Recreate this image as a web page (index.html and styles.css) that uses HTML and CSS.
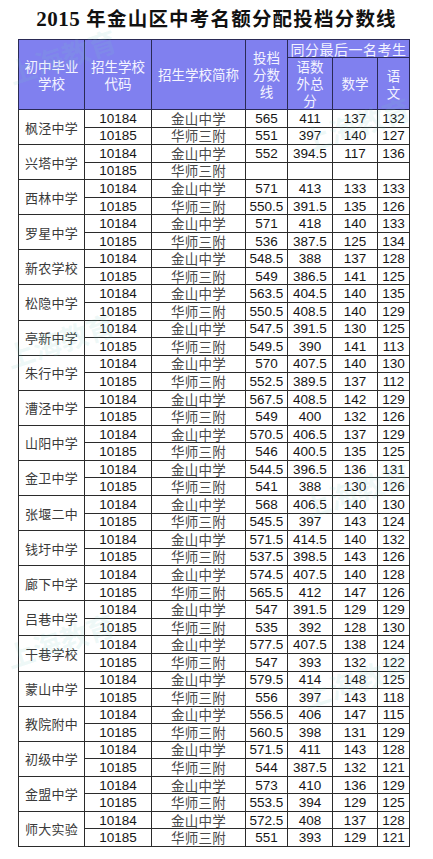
FILE: index.html
```html
<!DOCTYPE html>
<html lang="zh-CN">
<head>
<meta charset="utf-8">
<title>2015 年金山区中考名额分配投档分数线</title>
<link rel="stylesheet" href="styles.css">
</head>
<body>
<div class="page">
  <h1 class="title"><span class="num">2015</span> 年金山区中考名额分配投档分数线</h1>
  <table class="score">
    <colgroup>
      <col class="c1"><col class="c2"><col class="c3"><col class="c4"><col class="c5"><col class="c6"><col class="c7">
    </colgroup>
    <thead>
      <tr class="h1">
        <th rowspan="2">初中毕业<br>学校</th>
        <th rowspan="2">招生学校<br>代码</th>
        <th rowspan="2">招生学校简称</th>
        <th rowspan="2" class="tight">投档<br>分数<br>线</th>
        <th colspan="3" class="group">同分最后一名考生</th>
      </tr>
      <tr class="h2">
        <th class="tight">语数<br>外总<br>分</th>
        <th>数学</th>
        <th class="tight">语<br>文</th>
      </tr>
    </thead>
    <tbody>
      <tr><td rowspan="2" class="sch">枫泾中学</td><td>10184</td><td class="cn">金山中学</td><td>565</td><td>411</td><td>137</td><td>132</td></tr>
      <tr><td>10185</td><td class="cn">华师三附</td><td>551</td><td>397</td><td>140</td><td>127</td></tr>
      <tr><td rowspan="2" class="sch">兴塔中学</td><td>10184</td><td class="cn">金山中学</td><td>552</td><td>394.5</td><td>117</td><td>136</td></tr>
      <tr><td>10185</td><td class="cn">华师三附</td><td></td><td></td><td></td><td></td></tr>
      <tr><td rowspan="2" class="sch">西林中学</td><td>10184</td><td class="cn">金山中学</td><td>571</td><td>413</td><td>133</td><td>133</td></tr>
      <tr><td>10185</td><td class="cn">华师三附</td><td>550.5</td><td>391.5</td><td>135</td><td>126</td></tr>
      <tr><td rowspan="2" class="sch">罗星中学</td><td>10184</td><td class="cn">金山中学</td><td>571</td><td>418</td><td>140</td><td>133</td></tr>
      <tr><td>10185</td><td class="cn">华师三附</td><td>536</td><td>387.5</td><td>125</td><td>134</td></tr>
      <tr><td rowspan="2" class="sch">新农学校</td><td>10184</td><td class="cn">金山中学</td><td>548.5</td><td>388</td><td>137</td><td>128</td></tr>
      <tr><td>10185</td><td class="cn">华师三附</td><td>549</td><td>386.5</td><td>141</td><td>125</td></tr>
      <tr><td rowspan="2" class="sch">松隐中学</td><td>10184</td><td class="cn">金山中学</td><td>563.5</td><td>404.5</td><td>140</td><td>135</td></tr>
      <tr><td>10185</td><td class="cn">华师三附</td><td>550.5</td><td>408.5</td><td>140</td><td>129</td></tr>
      <tr><td rowspan="2" class="sch">亭新中学</td><td>10184</td><td class="cn">金山中学</td><td>547.5</td><td>391.5</td><td>130</td><td>125</td></tr>
      <tr><td>10185</td><td class="cn">华师三附</td><td>549.5</td><td>390</td><td>141</td><td>113</td></tr>
      <tr><td rowspan="2" class="sch">朱行中学</td><td>10184</td><td class="cn">金山中学</td><td>570</td><td>407.5</td><td>140</td><td>130</td></tr>
      <tr><td>10185</td><td class="cn">华师三附</td><td>552.5</td><td>389.5</td><td>137</td><td>112</td></tr>
      <tr><td rowspan="2" class="sch">漕泾中学</td><td>10184</td><td class="cn">金山中学</td><td>567.5</td><td>408.5</td><td>142</td><td>129</td></tr>
      <tr><td>10185</td><td class="cn">华师三附</td><td>549</td><td>400</td><td>132</td><td>126</td></tr>
      <tr><td rowspan="2" class="sch">山阳中学</td><td>10184</td><td class="cn">金山中学</td><td>570.5</td><td>406.5</td><td>137</td><td>129</td></tr>
      <tr><td>10185</td><td class="cn">华师三附</td><td>546</td><td>400.5</td><td>135</td><td>125</td></tr>
      <tr><td rowspan="2" class="sch">金卫中学</td><td>10184</td><td class="cn">金山中学</td><td>544.5</td><td>396.5</td><td>136</td><td>131</td></tr>
      <tr><td>10185</td><td class="cn">华师三附</td><td>541</td><td>388</td><td>130</td><td>126</td></tr>
      <tr><td rowspan="2" class="sch">张堰二中</td><td>10184</td><td class="cn">金山中学</td><td>568</td><td>406.5</td><td>140</td><td>130</td></tr>
      <tr><td>10185</td><td class="cn">华师三附</td><td>545.5</td><td>397</td><td>143</td><td>124</td></tr>
      <tr><td rowspan="2" class="sch">钱圩中学</td><td>10184</td><td class="cn">金山中学</td><td>571.5</td><td>414.5</td><td>140</td><td>132</td></tr>
      <tr><td>10185</td><td class="cn">华师三附</td><td>537.5</td><td>398.5</td><td>143</td><td>126</td></tr>
      <tr><td rowspan="2" class="sch">廊下中学</td><td>10184</td><td class="cn">金山中学</td><td>574.5</td><td>407.5</td><td>140</td><td>128</td></tr>
      <tr><td>10185</td><td class="cn">华师三附</td><td>565.5</td><td>412</td><td>147</td><td>126</td></tr>
      <tr><td rowspan="2" class="sch">吕巷中学</td><td>10184</td><td class="cn">金山中学</td><td>547</td><td>391.5</td><td>129</td><td>129</td></tr>
      <tr><td>10185</td><td class="cn">华师三附</td><td>535</td><td>392</td><td>128</td><td>130</td></tr>
      <tr><td rowspan="2" class="sch">干巷学校</td><td>10184</td><td class="cn">金山中学</td><td>577.5</td><td>407.5</td><td>138</td><td>124</td></tr>
      <tr><td>10185</td><td class="cn">华师三附</td><td>547</td><td>393</td><td>132</td><td>122</td></tr>
      <tr><td rowspan="2" class="sch">蒙山中学</td><td>10184</td><td class="cn">金山中学</td><td>579.5</td><td>414</td><td>148</td><td>125</td></tr>
      <tr><td>10185</td><td class="cn">华师三附</td><td>556</td><td>397</td><td>143</td><td>118</td></tr>
      <tr><td rowspan="2" class="sch">教院附中</td><td>10184</td><td class="cn">金山中学</td><td>556.5</td><td>406</td><td>147</td><td>115</td></tr>
      <tr><td>10185</td><td class="cn">华师三附</td><td>560.5</td><td>398</td><td>131</td><td>129</td></tr>
      <tr><td rowspan="2" class="sch">初级中学</td><td>10184</td><td class="cn">金山中学</td><td>571.5</td><td>411</td><td>143</td><td>128</td></tr>
      <tr><td>10185</td><td class="cn">华师三附</td><td>544</td><td>387.5</td><td>132</td><td>121</td></tr>
      <tr><td rowspan="2" class="sch">金盟中学</td><td>10184</td><td class="cn">金山中学</td><td>573</td><td>410</td><td>136</td><td>129</td></tr>
      <tr><td>10185</td><td class="cn">华师三附</td><td>553.5</td><td>394</td><td>129</td><td>125</td></tr>
      <tr><td rowspan="2" class="sch">师大实验</td><td>10184</td><td class="cn">金山中学</td><td>572.5</td><td>408</td><td>137</td><td>128</td></tr>
      <tr><td>10185</td><td class="cn">华师三附</td><td>551</td><td>393</td><td>129</td><td>121</td></tr>
    </tbody>
  </table>
  <div class="wm wm1">上海教育</div>
  <div class="wm wm2">上海教育</div>
  <div class="wm wm3">上海教育</div>
  <div class="wm wm4">上海教育</div>
  <div class="wm wm5">上海教育</div>
  <div class="wm wm6">上海教育</div>
</div>
</body>
</html>
```

FILE: styles.css
```css
html, body {
  margin: 0;
  padding: 0;
  background: #ffffff;
}

.page {
  position: relative;
  width: 433px;
  height: 859px;
  overflow: hidden;
  font-family: "Noto Sans CJK SC", sans-serif;
}

.title {
  margin: 0;
  padding-top: 8px;
  height: 31px;
  box-sizing: border-box;
  text-align: center;
  font-family: "Liberation Serif", "Noto Sans CJK SC", serif;
  font-weight: 700;
  font-size: 19.5px;
  line-height: 22px;
  letter-spacing: 1.2px;
  color: #111;
}

.title .num {
  font-size: 21px;
  letter-spacing: 0.5px;
}

.score {
  margin-left: 18px;
  margin-top: 8px;
  border-collapse: collapse;
  table-layout: fixed;
  width: 391px;
}

.c1 { width: 66px; }
.c2 { width: 67px; }
.c3 { width: 94px; }
.c4 { width: 42px; }
.c5 { width: 45px; }
.c6 { width: 45px; }
.c7 { width: 32px; }

.score th {
  background: #8080ef;
  color: #f4f4ff;
  font-weight: 400;
  font-size: 13.5px;
  line-height: 17px;
  border: 1px solid #2a2a55;
  padding: 0;
  text-align: center;
  vertical-align: middle;
  font-family: "Noto Sans CJK SC", sans-serif;
}

.score th.tight {
  line-height: 17px;
}

.score .h1 { height: 18px; }
.score .h2 { height: 52px; }

.score th.group {
  font-size: 14px;
  letter-spacing: 0.5px;
  line-height: 16px;
  white-space: nowrap;
}

.score td {
  border: 1px solid #2b2b2b;
  padding: 0;
  height: 16.55px;
  line-height: 15px;
  text-align: center;
  vertical-align: middle;
  font-family: "Liberation Sans", Arial, sans-serif;
  font-size: 13.5px;
  color: #151515;
  white-space: nowrap;
}

.score td.cn {
  font-family: "Noto Sans CJK SC", sans-serif;
  font-size: 13.5px;
  color: #4a4a4a;
  letter-spacing: 0.2px;
}

.score td.sch {
  font-family: "Noto Sans CJK SC", sans-serif;
  font-size: 13px;
  color: #3a3a3a;
  letter-spacing: 0.3px;
}

.wm {
  position: absolute;
  pointer-events: none;
  font-family: "Noto Sans CJK SC", sans-serif;
  font-weight: 700;
  font-size: 28px;
  color: rgba(120, 205, 195, 0.13);
  transform: rotate(-18deg);
  white-space: nowrap;
}

.wm1 { left: 6px; top: 36px; }
.wm2 { left: 300px; top: 104px; }
.wm3 { left: 4px; top: 320px; }
.wm4 { left: 300px; top: 470px; }
.wm5 { left: 4px; top: 620px; }
.wm6 { left: 300px; top: 660px; }
```
